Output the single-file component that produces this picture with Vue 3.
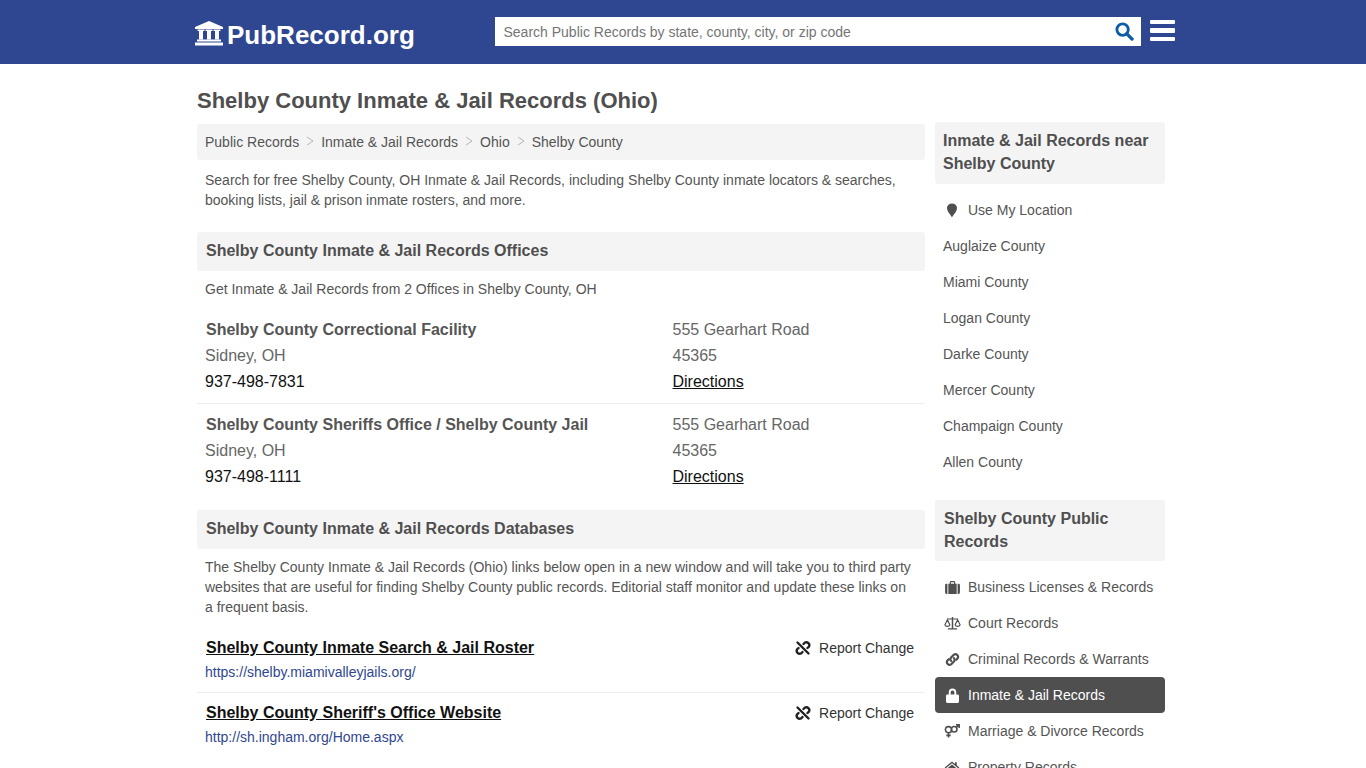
<script setup>
const crumbs = ['Public Records', 'Inmate & Jail Records', 'Ohio', 'Shelby County']
const offices = [
  { name: 'Shelby County Correctional Facility', city: 'Sidney, OH', phone: '937-498-7831', street: '555 Gearhart Road', zip: '45365' },
  { name: 'Shelby County Sheriffs Office / Shelby County Jail', city: 'Sidney, OH', phone: '937-498-1111', street: '555 Gearhart Road', zip: '45365' }
]
const links = [
  { title: 'Shelby County Inmate Search & Jail Roster', url: 'https://shelby.miamivalleyjails.org/' },
  { title: "Shelby County Sheriff's Office Website", url: 'http://sh.ingham.org/Home.aspx' }
]
const nearby = ['Auglaize County', 'Miami County', 'Logan County', 'Darke County', 'Mercer County', 'Champaign County', 'Allen County']
const records = [
  { label: 'Business Licenses & Records', icon: 'case' },
  { label: 'Court Records', icon: 'scale' },
  { label: 'Criminal Records & Warrants', icon: 'link' },
  { label: 'Inmate & Jail Records', icon: 'lock', active: true },
  { label: 'Marriage & Divorce Records', icon: 'gender' },
  { label: 'Property Records', icon: 'home' }
]
</script>

<template>
  <div class="page">
    <header class="top">
      <div class="top-inner">
        <a class="logo">
          <svg class="logo-icon" viewBox="0 0 28 25" width="28" height="25">
            <path d="M14 0 L28 6 V8 H0 V6 Z" fill="#fff" />
            <path d="M4 9.500h4v9H4zM12 9.500h4v9h-4zM20 9.500h4v9h-4z" fill="#fff" />
            <path d="M2.500 8.500h7v1.500h-7zM10.500 8.500h7v1.500h-7zM18.500 8.500h7v1.500h-7z" fill="#fff" />
            <path d="M2 18.500h24v2H2zM0 21.500h28v3H0z" fill="#fff" />
          </svg>
          <span>PubRecord.org</span>
        </a>
        <div class="search">
          <span class="placeholder">Search Public Records by state, county, city, or zip code</span>
          <svg viewBox="0 0 20 20" width="19" height="19" class="search-icon">
            <circle cx="8" cy="8" r="6" fill="none" stroke="#0d5da6" stroke-width="3" />
            <path d="M12.500 12.500 L18 18" stroke="#0d5da6" stroke-width="3.500" stroke-linecap="round" />
          </svg>
        </div>
        <div class="burger"><i></i><i></i><i></i></div>
      </div>
    </header>

    <div class="wrap">
      <main class="main">
        <h1>Shelby County Inmate &amp; Jail Records (Ohio)</h1>
        <nav class="crumbs">
          <template v-for="(c, i) in crumbs" :key="c">
            <span class="crumb">{{ c }}</span>
            <svg v-if="i < crumbs.length - 1" class="sep" viewBox="0 0 8 10" width="8" height="10">
              <path d="M1 1 L7 5 L1 9" fill="none" stroke="#b5b5b5" stroke-width="1" />
            </svg>
          </template>
        </nav>
        <p class="copy intro">Search for free Shelby County, OH Inmate &amp; Jail Records, including Shelby County inmate locators &amp; searches, booking lists, jail &amp; prison inmate rosters, and more.</p>

        <h2 class="band">Shelby County Inmate &amp; Jail Records Offices</h2>
        <p class="copy lead">Get Inmate &amp; Jail Records from 2 Offices in Shelby County, OH</p>

        <div class="offices">
          <div v-for="o in offices" :key="o.name" class="office">
            <div class="office-left">
              <div class="office-name">{{ o.name }}</div>
              <div class="office-line">{{ o.city }}</div>
              <div class="office-line dark">{{ o.phone }}</div>
            </div>
            <div class="office-right">
              <div class="office-line">{{ o.street }}</div>
              <div class="office-line">{{ o.zip }}</div>
              <div class="office-line dark"><u>Directions</u></div>
            </div>
          </div>
        </div>

        <h2 class="band second">Shelby County Inmate &amp; Jail Records Databases</h2>
        <p class="copy lead-long">The Shelby County Inmate &amp; Jail Records (Ohio) links below open in a new window and will take you to third party websites that are useful for finding Shelby County public records. Editorial staff monitor and update these links on a frequent basis.</p>

        <div class="links">
          <div v-for="l in links" :key="l.url" class="link-row">
            <div class="link-head">
              <a class="link-title">{{ l.title }}</a>
              <span class="report">
                <svg viewBox="0 0 16 16" width="16" height="16">
                  <g fill="none" stroke="#222" stroke-width="2.400" stroke-linecap="round">
                    <path d="M8.500 4 L10 2.500 A3 3 0 0 1 14 6.500 L12.500 8" />
                    <path d="M7.500 12 L6 13.500 A3 3 0 0 1 2 9.500 L3.500 8" />
                    <path d="M2.500 2.500 L13.500 13.500" />
                  </g>
                </svg>
                Report Change
              </span>
            </div>
            <div class="link-url">{{ l.url }}</div>
          </div>
        </div>
      </main>

      <aside class="side">
        <h3 class="side-head near">Inmate &amp; Jail Records near Shelby County</h3>
        <ul class="side-list first">
          <li class="side-item">
            <span class="ico">
              <svg viewBox="0 0 12 15" width="12" height="15"><path d="M6 14.500 C4.500 11.500 1 8.500 1 5 A5 4.500 0 0 1 11 5 C11 8.500 7.500 11.500 6 14.500 Z" fill="#4f4f4f" /></svg>
            </span>
            Use My Location
          </li>
          <li v-for="n in nearby" :key="n" class="side-item plain">{{ n }}</li>
        </ul>
        <h3 class="side-head lower">Shelby County Public Records</h3>
        <ul class="side-list">
          <li v-for="r in records" :key="r.label" class="side-item" :class="{ active: r.active }">
            <span class="ico">
              <svg v-if="r.icon === 'case'" viewBox="0 0 16 14" width="15" height="13">
                <path d="M0 4.500 A1.500 1.500 0 0 1 1.500 3 H2.500 V14 H1.500 A1.500 1.500 0 0 1 0 12.500 Z M13.500 3 H14.500 A1.500 1.500 0 0 1 16 4.500 V12.500 A1.500 1.500 0 0 1 14.500 14 H13.500 Z" fill="#4f4f4f" />
                <path d="M3.500 3 H5 V1.500 A1.500 1.500 0 0 1 6.500 0 H9.500 A1.500 1.500 0 0 1 11 1.500 V3 H12.500 V14 H3.500 Z M6.300 3 H9.700 V1.300 H6.300 Z" fill="#4f4f4f" fill-rule="evenodd" />
              </svg>
              <svg v-else-if="r.icon === 'scale'" viewBox="0 0 18 14" width="17" height="13">
                <path d="M8.200 1.500 H3 V2.700 H8.200 V12 H4 V13.500 H14 V12 H9.800 V2.700 H15 V1.500 H9.800 V0 H8.200 Z" fill="#4f4f4f" />
                <path d="M3.500 3 L0.800 8.500 A2.800 2.200 0 0 0 6.200 8.500 Z M14.500 3 L11.800 8.500 A2.800 2.200 0 0 0 17.200 8.500 Z" fill="none" stroke="#4f4f4f" stroke-width="1.200" />
              </svg>
              <svg v-else-if="r.icon === 'link'" viewBox="0 0 16 16" width="15" height="15">
                <g fill="none" stroke="#4f4f4f" stroke-width="2.300" stroke-linecap="round">
                  <path d="M6.500 9.500 A2.800 2.800 0 0 1 6.500 5.800 L9.500 2.800 A2.900 2.900 0 0 1 13.500 6.800 L12 8.300" />
                  <path d="M9.500 6.500 A2.800 2.800 0 0 1 9.500 10.200 L6.500 13.200 A2.900 2.900 0 0 1 2.500 9.200 L4 7.700" />
                </g>
              </svg>
              <svg v-else-if="r.icon === 'lock'" viewBox="0 0 14 16" width="13" height="15">
                <path d="M1.500 7 H3 V4.500 A4 4 0 0 1 11 4.500 V7 H12.500 A1.500 1.500 0 0 1 14 8.500 V14.500 A1.500 1.500 0 0 1 12.500 16 H1.500 A1.500 1.500 0 0 1 0 14.500 V8.500 A1.500 1.500 0 0 1 1.500 7 Z M5 7 H9 V4.500 A2 2 0 0 0 5 4.500 Z" fill="#fff" fill-rule="evenodd" />
              </svg>
              <svg v-else-if="r.icon === 'gender'" viewBox="0 0 18 16" width="16" height="14">
                <g fill="none" stroke="#4f4f4f" stroke-width="1.800">
                  <circle cx="5" cy="6.500" r="3.500" />
                  <path d="M5 10 V15.500 M2.500 13 H7.500" />
                  <circle cx="11.500" cy="6" r="3.200" />
                  <path d="M13.700 3.800 L17 1 M13.500 0.800 H17.200 V4.500" />
                </g>
              </svg>
              <svg v-else viewBox="0 0 18 15" width="16" height="13">
                <path d="M9 0.500 L0.500 7.500 L1.500 8.700 L9 2.700 L16.500 8.700 L17.500 7.500 L14.500 5 V1.500 H12.500 V3.400 Z" fill="#4f4f4f" />
                <path d="M3 9 L9 4 L15 9 V14.500 H11 V10.500 H7 V14.500 H3 Z" fill="#4f4f4f" />
              </svg>
            </span>
            {{ r.label }}
          </li>
        </ul>
      </aside>
    </div>
  </div>
</template>

<style>
html, body { margin: 0; height: 768px; overflow: hidden; background: #fff; }
</style>

<style scoped>
.page { font-family: "Liberation Sans", Arial, sans-serif; color: #555; font-size: 14px; }
.top { height: 64px; background: #2f4790; }
.top-inner { margin-left: 195px; height: 64px; display: flex; align-items: flex-start; }
.logo { display: flex; align-items: flex-start; color: #fff; font-weight: 700; font-size: 26px; padding-top: 19px; line-height: 32px; width: 300px; }
.logo-icon { margin-top: 2px; margin-right: 4px; flex: none; }
.search { margin-top: 17px; width: 646px; height: 29px; background: #fff; display: flex; align-items: center; justify-content: space-between; box-sizing: border-box; padding: 0 7px 0 8.500px; }
.placeholder { color: #757575; font-size: 14px; }
.search-icon { flex: none; }
.burger { margin-left: 9px; margin-top: 20px; width: 25px; display: flex; flex-direction: column; gap: 4px; }
.burger i { display: block; height: 4.400px; background: #fff; border-radius: 1px; }
.wrap { width: 968px; margin: 0 0 0 197px; display: flex; gap: 10px; align-items: flex-start; }
.main { width: 728px; flex: none; }
h1 { margin: 23px 0 10px; font-size: 22px; line-height: 27px; font-weight: 700; color: #4f4f4f; }
.crumbs { background: #f4f4f4; border-radius: 3px; height: 36px; display: flex; align-items: center; padding-left: 8px; gap: 7px; }
.sep { flex: none; margin-top: -2px; }
.copy { margin: 0; padding: 0 8px; line-height: 20px; }
.intro { margin-top: 10px; }
.band { margin: 22px 0 0; background: #f4f4f4; border-radius: 3px; height: 39px; line-height: 37px; font-size: 16px; font-weight: 700; padding-left: 9px; color: #4f4f4f; }
.second { margin-top: 12px; }
.lead { margin-top: 8px; }
.lead-long { margin-top: 8px; }
.offices { margin-top: 18px; }
.office { display: flex; border-bottom: 1px solid #eee; padding: 0 0 8px; margin-bottom: 8px; }
.office:last-child { border-bottom: 0; margin-bottom: 0; }
.office-left { width: 475.500px; padding-left: 8px; box-sizing: border-box; }
.office-name { font-weight: 700; font-size: 16px; line-height: 26px; padding-left: 1px; }
.office-line { font-size: 16px; line-height: 26px; color: #666; }
.office-line.dark { color: #111; }
.links { margin-top: 11px; }
.link-row { border-bottom: 1px solid #eee; height: 65px; box-sizing: border-box; padding-top: 7px; }
.link-row:last-child { border-bottom: 0; }
.link-head { display: flex; justify-content: space-between; align-items: center; padding-left: 9px; padding-right: 11px; height: 26px; }
.link-title { font-size: 16px; font-weight: 700; color: #111; text-decoration: underline; }
.report { display: flex; align-items: center; gap: 8px; color: #333; }
.link-url { color: #2f4790; padding-left: 8px; line-height: 20px; margin-top: 1px; }
.side { width: 230px; flex: none; padding-top: 58px; }
.side-head { margin: 0; background: #f4f4f4; border-radius: 3px; font-size: 16px; font-weight: 700; line-height: 23px; padding: 7px 9px 8px 8px; color: #4f4f4f; }
.side-head.near { padding-bottom: 9px; }
.side-head.lower { margin-top: 20px; padding-left: 9px; }
.side-list { list-style: none; margin: 8px 0 0; padding: 0; }
.side-item { height: 36px; display: flex; align-items: center; border-radius: 4px; padding-left: 8px; color: #555; }
.ico { width: 18px; margin-right: 7px; display: flex; justify-content: center; align-items: center; flex: none; }
.active { background: #4f4f4f; color: #fff; }
</style>
